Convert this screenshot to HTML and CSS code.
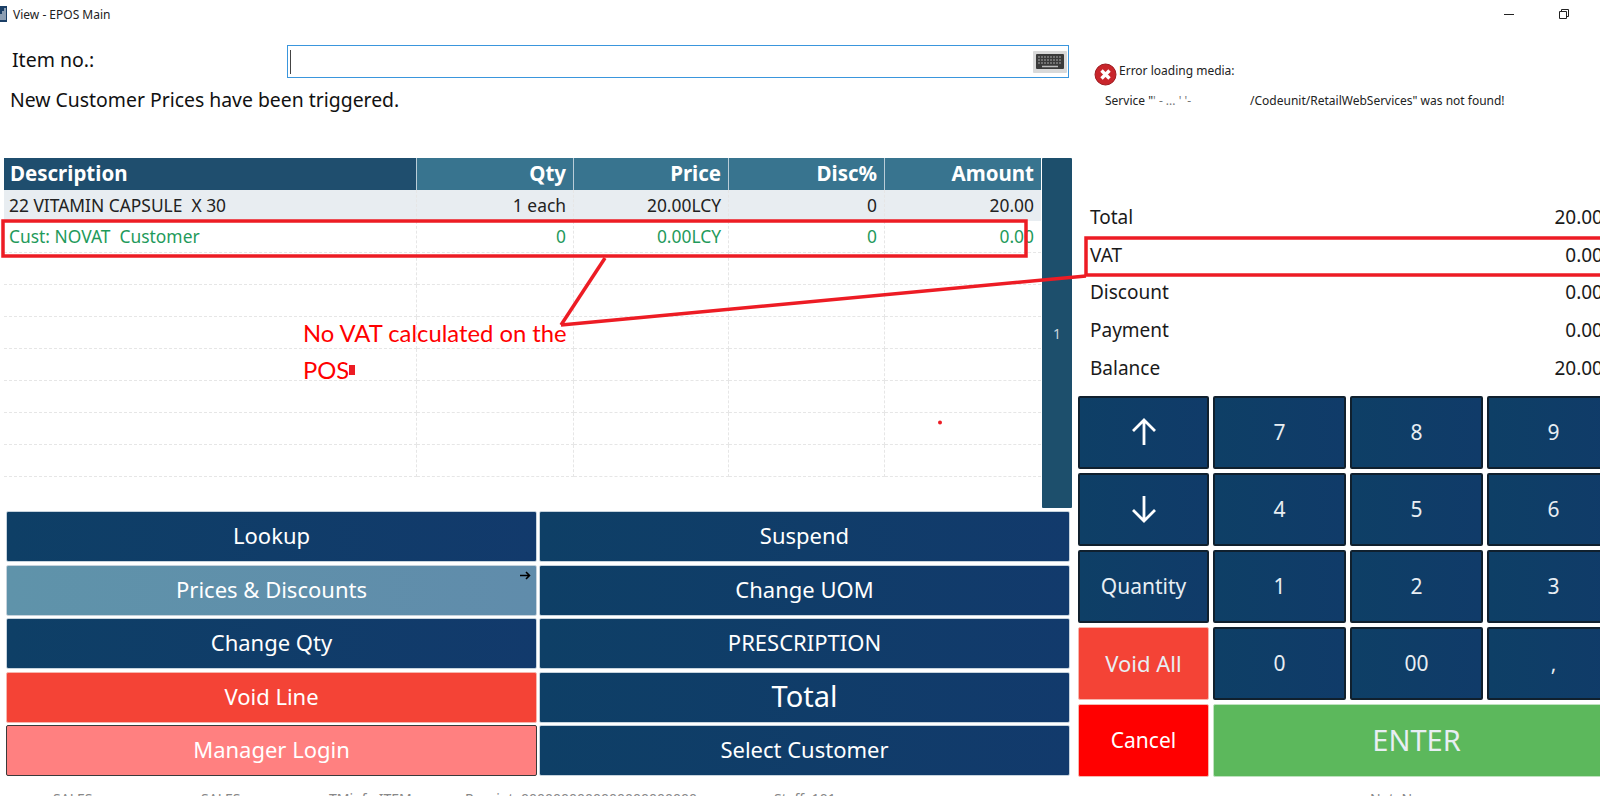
FILE: index.html
```html
<!DOCTYPE html>
<html lang="en">
<head>
<meta charset="utf-8">
<title>View - EPOS Main</title>
<link rel="stylesheet" href="styles.css">
</head>
<body>
<div class="app">
  <header class="titlebar">
    <svg class="app-icon" width="7" height="16" viewBox="0 0 7 16"><rect width="7" height="16" fill="#1b3f66"/><path d="M1 14V8M3 14V5M5 14V2" stroke="#fff" stroke-width="1"/></svg>
    <span class="title-text">View - EPOS Main</span>
    <div class="win-controls">
      <span class="win-min"></span>
      <svg class="win-restore" width="10" height="10" viewBox="0 0 10 10"><path d="M2.5 2.5V.5h7v7h-2M.5 2.5h7v7h-7z" fill="none" stroke="#222"/></svg>
    </div>
  </header>
  <div class="main">
    <section class="left">
      <div class="item-row">
        <label class="item-label">Item no.:</label>
        <div class="item-input">
          <span class="caret"></span>
          <svg class="keyboard" width="34" height="22" viewBox="0 0 34 22"><rect width="34" height="22" rx="1" fill="#d9d9d9"/><rect x="3" y="3" width="28" height="15" rx="1" fill="#3a3a3a"/><path d="M5 6h24M5 9h24M5 12h24" stroke="#a8a8a8" stroke-width="1" stroke-dasharray="2 1"/><path d="M9 15.5h16" stroke="#bbb" stroke-width="1.5"/></svg>
        </div>
      </div>
      <p class="message">New Customer Prices have been triggered.</p>
      <div class="grid-wrap">
        <div class="lines">
          <div class="line line-head">
            <div class="cell cell-desc">Description</div><div class="cell">Qty</div><div class="cell">Price</div><div class="cell">Disc%</div><div class="cell">Amount</div>
          </div>
          <div class="line line-sel">
            <div class="cell cell-desc">22 VITAMIN CAPSULE&nbsp; X 30</div><div class="cell">1 each</div><div class="cell">20.00LCY</div><div class="cell">0</div><div class="cell">20.00</div>
          </div>
          <div class="line line-green">
            <div class="cell cell-desc">Cust: NOVAT&nbsp; Customer</div><div class="cell">0</div><div class="cell">0.00LCY</div><div class="cell">0</div><div class="cell">0.00</div>
          </div>
          <div class="line"><div class="cell"></div><div class="cell"></div><div class="cell"></div><div class="cell"></div><div class="cell"></div></div>
          <div class="line"><div class="cell"></div><div class="cell"></div><div class="cell"></div><div class="cell"></div><div class="cell"></div></div>
          <div class="line"><div class="cell"></div><div class="cell"></div><div class="cell"></div><div class="cell"></div><div class="cell"></div></div>
          <div class="line"><div class="cell"></div><div class="cell"></div><div class="cell"></div><div class="cell"></div><div class="cell"></div></div>
          <div class="line"><div class="cell"></div><div class="cell"></div><div class="cell"></div><div class="cell"></div><div class="cell"></div></div>
          <div class="line"><div class="cell"></div><div class="cell"></div><div class="cell"></div><div class="cell"></div><div class="cell"></div></div>
          <div class="line"><div class="cell"></div><div class="cell"></div><div class="cell"></div><div class="cell"></div><div class="cell"></div></div>
        </div>
        <div class="pager">1</div>
      </div>
      <div class="actions">
        <button class="act">Lookup</button>
        <button class="act">Suspend</button>
        <button class="act act-light">Prices &amp; Discounts
          <svg class="sub-arrow" width="11" height="9" viewBox="0 0 11 9"><path d="M0 4.5h9M6 1l3.500 3.500L6 8" fill="none" stroke="#000" stroke-width="1.600"/></svg>
        </button>
        <button class="act">Change UOM</button>
        <button class="act">Change Qty</button>
        <button class="act">PRESCRIPTION</button>
        <button class="act act-red">Void Line</button>
        <button class="act act-total">Total</button>
        <button class="act act-pink">Manager Login</button>
        <button class="act">Select Customer</button>
      </div>
    </section>
    <aside class="right">
      <div class="media-error">
        <div class="media-head">
          <svg class="err-icon" width="23" height="23" viewBox="0 0 23 23"><circle cx="11.500" cy="11.500" r="10.500" fill="#c9252b" stroke="#9c1a1f"/><path d="M7.500 7.500l8 8M15.500 7.500l-8 8" stroke="#fff" stroke-width="3.400"/></svg>
          <span>Error loading media:</span>
        </div>
        <p class="media-body">Service "<span class="redacted">' - ... ' '- </span>/Codeunit/RetailWebServices" was not found!</p>
      </div>
      <div class="totals">
        <div class="total-row"><span>Total</span><span>20.00</span></div>
        <div class="total-row"><span>VAT</span><span>0.00</span></div>
        <div class="total-row"><span>Discount</span><span>0.00</span></div>
        <div class="total-row"><span>Payment</span><span>0.00</span></div>
        <div class="total-row"><span>Balance</span><span>20.00</span></div>
      </div>
      <div class="keypad">
        <button class="key"><svg width="26" height="28" viewBox="0 0 26 28"><path d="M13 27V2M2 13L13 2l11 11" fill="none" stroke="#fff" stroke-width="2.800"/></svg></button>
        <button class="key">7</button><button class="key">8</button><button class="key">9</button>
        <button class="key"><svg width="26" height="28" viewBox="0 0 26 28"><path d="M13 1v25M2 15l11 11 11-11" fill="none" stroke="#fff" stroke-width="2.800"/></svg></button>
        <button class="key">4</button><button class="key">5</button><button class="key">6</button>
        <button class="key">Quantity</button>
        <button class="key">1</button><button class="key">2</button><button class="key">3</button>
        <button class="key key-void">Void All</button>
        <button class="key">0</button><button class="key">00</button><button class="key">,</button>
        <button class="key key-cancel">Cancel</button>
        <button class="key key-enter">ENTER</button>
      </div>
    </aside>
  </div>
  <footer class="status">
    <span class="st-a">SALES</span><span class="st-b">SALES</span><span class="st-c">TMinfo ITEM</span><span class="st-d">Receipt: 0000000000000000000000</span><span class="st-e">Staff: 101</span><span class="st-f">Not: No</span>
  </footer>

  <svg class="markup" width="1600" height="796" viewBox="0 0 1600 796">
    <g fill="none" stroke="#ed1c24" stroke-width="3.500">
      <rect x="3" y="221" width="1023" height="35"/>
      <path d="M1086 238H1604V275H1086Z"/>
      <path d="M605 258L561 325"/>
      <path d="M561 325L1086 276"/>
    </g>
    <rect x="349" y="365" width="6" height="10" fill="#ed1c24"/>
    <circle cx="940" cy="422.500" r="2" fill="#ed1c24"/>
  </svg>
  <div class="note">No VAT calculated on the<br>POS</div>
</div>
</body>
</html>
```
FILE: styles.css
```css
* { box-sizing: border-box; }
html, body { margin: 0; padding: 0; background: #fff; }
body { font-family: "Noto Sans", "Open Sans", sans-serif; color: #111; }
button { font-family: inherit; cursor: pointer; }

.app {
  position: relative;
  width: 1600px;
  height: 796px;
  overflow: hidden;
  display: flex;
  flex-direction: column;
}

.titlebar {
  height: 28px;
  flex: none;
  display: flex;
  align-items: center;
  font-size: 12px;
  color: #222;
}
.app-icon { margin-right: 6px; }
.win-controls { margin-left: auto; display: flex; align-items: center; gap: 45px; padding-right: 31px; }
.win-min { width: 10px; height: 1px; background: #222; }

.main { display: flex; height: 764px; flex: none; }
.left { width: 1074px; flex: none; padding-left: 4px; }
.right { flex: 1; min-width: 0; padding-left: 4px; }

.item-row { display: flex; align-items: center; margin-top: 17px; height: 33px; padding-left: 8px; }
.item-label { width: 275px; font-size: 19.500px; line-height: 29px; align-self: flex-start; }
.item-input {
  width: 782px;
  height: 33px;
  border: 1px solid #3a96dd;
  display: flex;
  align-items: center;
  justify-content: space-between;
  padding: 0 1px 0 2px;
}
.caret { width: 1px; height: 24px; background: #444; }
.message { margin: 9px 0 0 6px; height: 25px; font-size: 19.400px; line-height: 25px; }

.grid-wrap { display: flex; margin-top: 46px; width: 1068px; gap: 1px; }
.lines { width: 1037px; }
.line { display: grid; grid-template-columns: 413px 157px 155px 156px 156px; height: 32px; }
.cell {
  border-right: 1px dashed #e6e6e6;
  border-bottom: 1px dashed #e6e6e6;
  padding: 0 7px 2px;
  display: flex;
  align-items: center;
  justify-content: flex-end;
  font-size: 17.400px;
  color: #222;
  white-space: nowrap;
}
.cell:last-child { border-right: 0; }
.cell-desc { justify-content: flex-start; padding-left: 5px; }
.line-head .cell {
  background: #38748f;
  color: #fff;
  font-size: 20.500px;
  font-weight: 700;
  border: 0;
  border-right: 1px solid #b9cdd8;
  padding-bottom: 3px;
}
.line-head .cell:last-child { border-right: 0; }
.line-head .cell-desc { background: #1f4e6e; padding-left: 6px; }
.line-sel { height: 31px; }
.line-sel .cell { background: #e8edf1; border-bottom: 0; }
.line-green .cell { color: #1f9a5b; }
.pager {
  width: 30px;
  height: 350px;
  background: #1d4f6c;
  color: #c9d6de;
  font-size: 14px;
  display: flex;
  align-items: center;
  justify-content: center;
  border-radius: 1px;
}

.actions {
  display: grid;
  grid-template-columns: 531px 531px;
  grid-auto-rows: 51px;
  gap: 2.500px 2px;
  margin: 3px 0 0 2px;
}
.act {
  position: relative;
  border: 1px solid #c6d3dd;
  border-radius: 2px;
  background: linear-gradient(90deg, #0e3f66, #123a6c);
  color: #fff;
  font-size: 22px;
  padding: 0 0 3px;
}
.act-light { background: linear-gradient(90deg, #5f93aa, #608cab); }
.act-red { background: #f44336; border-color: #f7b6ae; }
.act-pink { background: #ff8080; border: 1px solid #3a3a3a; }
.act-total { font-size: 29px; }
.sub-arrow { position: absolute; top: 5px; right: 5px; }

.media-error { height: 169px; padding-top: 31px; font-size: 12px; color: #222; }
.media-head { display: flex; align-items: flex-start; margin-left: 16px; }
.media-head span { margin-left: 2px; line-height: 18px; padding-top: 3px; }
.err-icon { flex: none; margin-top: 4px; }
.media-body { margin: 6px 0 0 27px; line-height: 18px; white-space: pre; }
.redacted { display: inline-block; width: 97px; color: #777; }

.totals { padding-left: 12px; margin-right: -3px; height: 199px; padding-top: 1px; }
.total-row {
  display: flex;
  justify-content: space-between;
  align-items: center;
  height: 37.800px;
  font-size: 19px;
  color: #1a1a1a;
}

.keypad {
  display: grid;
  grid-template-columns: 131px 133px 133px 133px;
  grid-auto-rows: 73px;
  gap: 4px;
  width: 560px;
}
.key {
  border: 2px solid #10202e;
  border-radius: 2px;
  background: linear-gradient(90deg, #0e3f66, #103b69);
  color: #e8eef3;
  font-size: 21px;
  padding: 0 0 2px;
  display: flex;
  align-items: center;
  justify-content: center;
}
.key-void { background: #f44336; border: 1px solid #f7b6ae; font-size: 22px; }
.key-cancel { background: #ff0000; border: 1px solid #f7b6ae; color: #fff; }
.key-enter { grid-column: span 3; background: #5cb85c; border: 1px solid #bfe3bf; font-size: 29px; }

.status {
  position: absolute;
  left: 0;
  top: 790px;
  width: 1600px;
  height: 6px;
  overflow: hidden;
  font-size: 14px;
  line-height: 18px;
  color: #888;
  display: flex;
}
.st-a { margin-left: 53px; width: 148px; }
.st-b { width: 128px; }
.st-c { width: 136px; }
.st-d { width: 309px; }
.st-e { width: 596px; }

.markup { position: absolute; left: 0; top: 0; pointer-events: none; }
.note {
  position: absolute;
  left: 303px;
  top: 315px;
  font-family: Lato, "Open Sans", sans-serif;
  font-size: 23.800px;
  line-height: 37px;
  color: #f00;
}
```
